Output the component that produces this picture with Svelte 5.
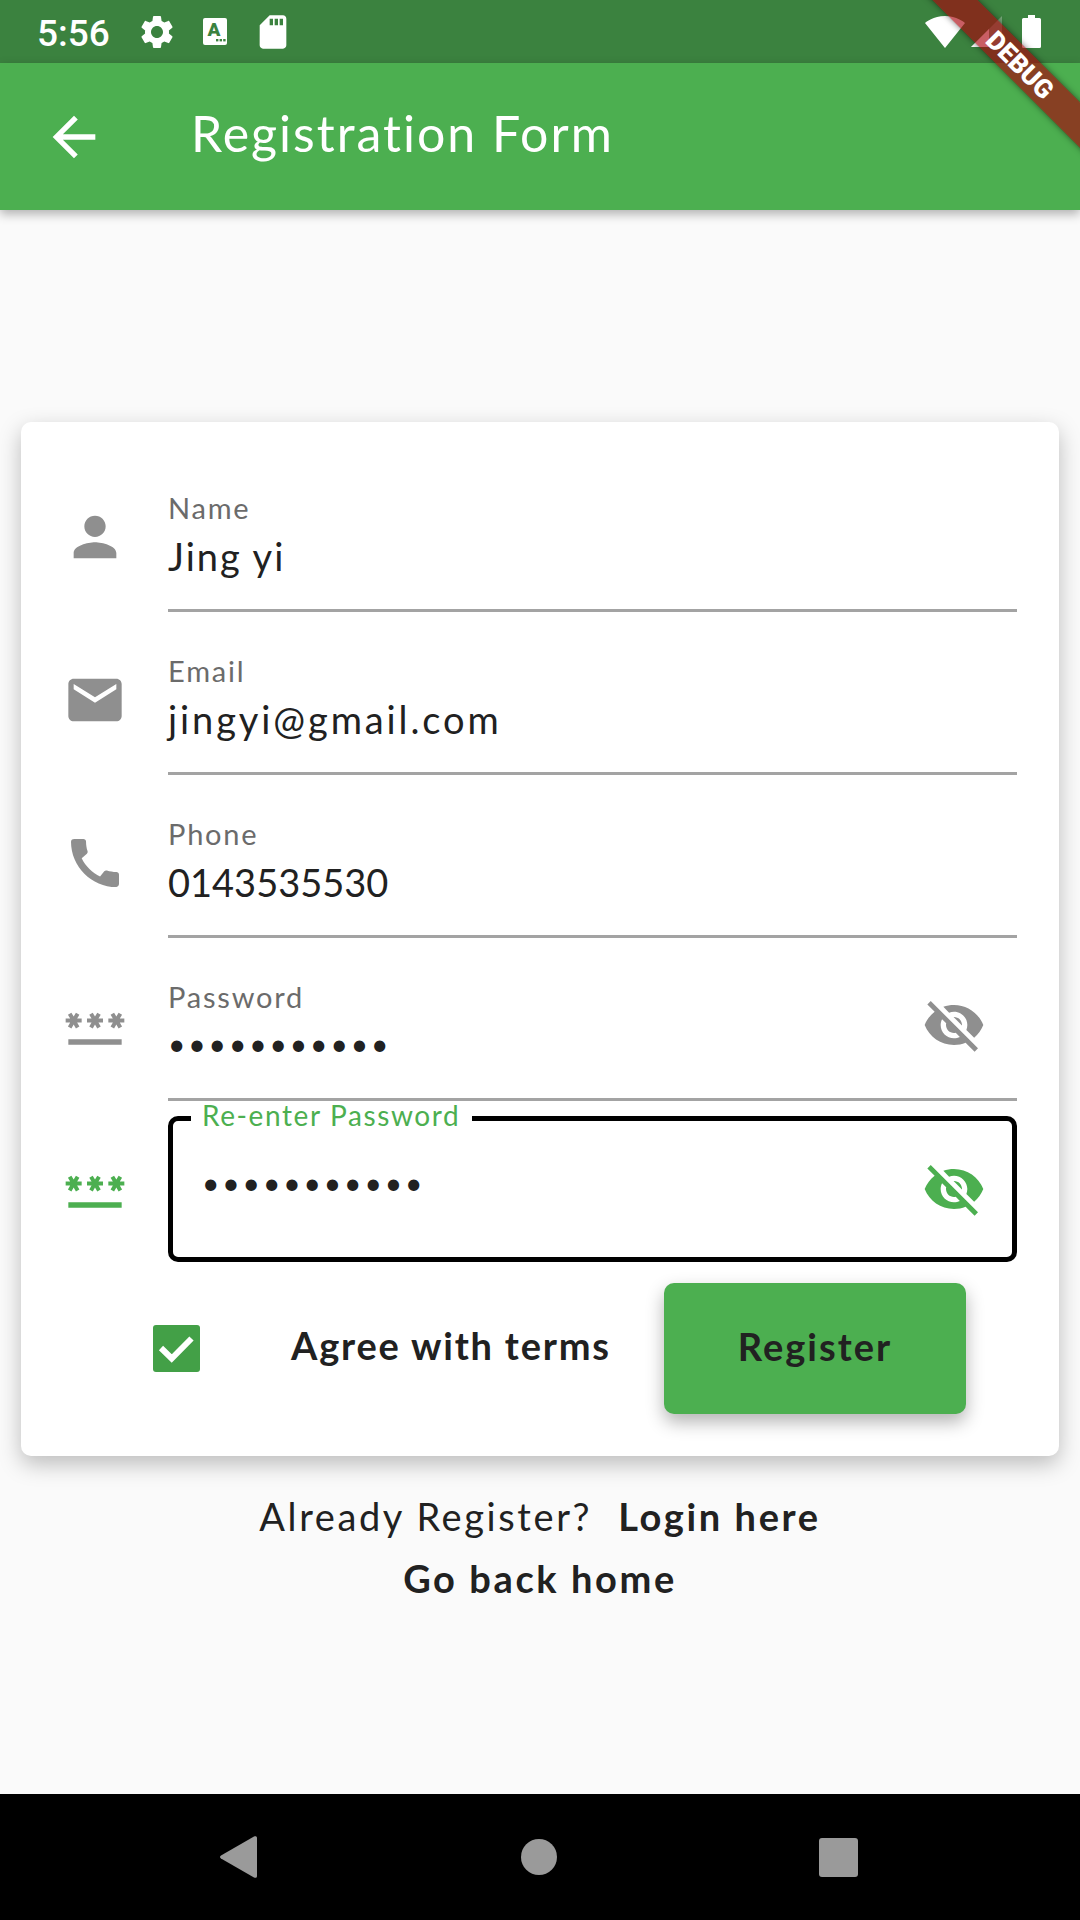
<script>
  const eyeOff = "M12 7c2.76 0 5 2.24 5 5 0 .65-.13 1.26-.36 1.83l2.92 2.92c1.51-1.26 2.7-2.89 3.43-4.75-1.73-4.39-6-7.5-11-7.5-1.4 0-2.74.25-3.98.7l2.16 2.16C10.74 7.13 11.35 7 12 7zM2 4.27l2.28 2.28.46.46C3.08 8.3 1.78 10.02 1 12c1.73 4.39 6 7.5 11 7.5 1.55 0 3.03-.3 4.38-.84l.42.42L19.73 22 21 20.73 3.27 3 2 4.27zM7.53 9.8l1.55 1.55c-.05.21-.08.43-.08.65 0 1.66 1.34 3 3 3 .22 0 .44-.03.65-.08l1.55 1.55c-.67.33-1.41.53-2.2.53-2.76 0-5-2.24-5-5 0-.79.2-1.53.53-2.2zm4.31-.78l3.15 3.15.02-.16c0-1.66-1.34-3-3-3l-.17.01z";
  const passwordIcon = "M2 17h20v2H2v-2zm1.15-4.05L4 11.47l.85 1.48 1.3-.75-.85-1.48H7v-1.5H5.3l.85-1.47L4.85 7 4 8.47 3.15 7l-1.3.75.85 1.47H1v1.5h1.7l-.85 1.48 1.3.75zm6.7-.75 1.3.75.85-1.48.85 1.48 1.3-.75-.85-1.48H15v-1.5h-1.7l.85-1.47-1.3-.75L12 8.47 11.15 7l-1.3.75.85 1.47H9v1.5h1.7l-.85 1.48zM23 9.22h-1.7l.85-1.47-1.3-.75L20 8.47 19.15 7l-1.3.75.85 1.47H17v1.5h1.7l-.85 1.48 1.3.75.85-1.48.85 1.48 1.3-.75-.85-1.48H23v-1.5z";

  // track: letter spacing per value, the digits need none
  const fields = [
    { label: "Name", value: "Jing yi", track: "2px", icon: "M12 12c2.21 0 4-1.79 4-4s-1.79-4-4-4-4 1.79-4 4 1.79 4 4 4zm0 2c-2.67 0-8 1.34-8 4v2h16v-2c0-2.66-5.33-4-8-4z" },
    { label: "Email", value: "jingyi@gmail.com", track: "2.9px", icon: "M20 4H4c-1.1 0-1.99.9-1.99 2L2 18c0 1.1.9 2 2 2h16c1.1 0 2-.9 2-2V6c0-1.1-.9-2-2-2zm0 4l-8 5-8-5V6l8 5 8-5v2z" },
    { label: "Phone", value: "0143535530", track: "0", icon: "M20.01 15.38c-1.23 0-2.42-.2-3.53-.56-.35-.12-.74-.03-1.01.24l-1.57 1.97c-2.83-1.35-5.48-3.9-6.89-6.83l1.95-1.66c.27-.28.35-.67.24-1.02-.37-1.11-.56-2.3-.56-3.53 0-.54-.45-.99-.99-.99H4.19C3.65 3 3 3.24 3 3.99 3 13.28 10.73 21 20.01 21c.71 0 .99-.63.99-1.18v-3.45c0-.54-.45-.99-.99-.99z" },
  ];
</script>

<div class="screen">
  <div class="status">
    <span class="time">5:56</span>
    <svg class="s-gear" width="40" height="40" viewBox="0 0 24 24"><path fill="#fff" d="M19.14 12.94c.04-.3.06-.61.06-.94 0-.32-.02-.64-.07-.94l2.03-1.58c.18-.14.23-.41.12-.61l-1.92-3.32c-.12-.22-.37-.29-.59-.22l-2.39.96c-.5-.38-1.03-.7-1.62-.94l-.36-2.54c-.04-.24-.24-.41-.48-.41h-3.84c-.24 0-.43.17-.47.41l-.36 2.54c-.59.24-1.13.57-1.62.94l-2.39-.96c-.22-.08-.47 0-.59.22L2.74 8.87c-.12.21-.08.47.12.61l2.03 1.58c-.05.3-.09.63-.09.94s.02.64.07.94l-2.03 1.58c-.18.14-.23.41-.12.61l1.92 3.32c.12.22.37.29.59.22l2.39-.96c.5.38 1.03.7 1.62.94l.36 2.54c.05.24.24.41.48.41h3.84c.24 0 .44-.17.47-.41l.36-2.54c.59-.24 1.13-.56 1.62-.94l2.39.96c.22.08.47 0 .59-.22l1.92-3.32c.12-.22.07-.47-.12-.61l-2.01-1.58zM12 15.6c-1.98 0-3.6-1.62-3.6-3.6s1.62-3.6 3.6-3.6 3.6 1.62 3.6 3.6-1.62 3.6-3.6 3.6z"/></svg>
    <svg class="s-icon" width="40" height="40" viewBox="0 0 40 40">
      <rect x="8" y="6" width="24" height="27" rx="2" fill="#fff"/>
      <text x="19" y="24" text-anchor="middle" class="sim-a">A</text>
      <rect x="21" y="27" width="2.4" height="2.4" fill="#3b823f"/>
      <rect x="24.6" y="27" width="2.4" height="2.4" fill="#3b823f"/>
      <rect x="28.2" y="27" width="2.4" height="2.4" fill="#3b823f"/>
    </svg>
    <svg class="s-icon" width="40" height="40" viewBox="0 0 24 24"><path fill="#fff" d="M18 2h-8L4.02 8 4 20c0 1.1.9 2 2 2h12c1.1 0 2-.9 2-2V4c0-1.1-.9-2-2-2zm-6 6h-2V4h2v4zm3 0h-2V4h2v4zm3 0h-2V4h2v4z"/></svg>
    <div class="status-right">
      <svg width="40" height="32" viewBox="0.36 3 23.28 18.5"><path fill="#fff" d="M12.01 21.49L23.64 7c-.45-.34-4.93-4-11.64-4C5.28 3 .81 6.66.36 7l11.63 14.49.01.01.01-.01z"/></svg>
      <svg width="31" height="31" viewBox="2 2 20 20"><path fill="#fff" fill-opacity="0.3" d="M2 22h20V2z"/><path fill="#fff" d="M2 22h11.600V10.400z"/></svg>
      <svg class="battery" width="19" height="33" viewBox="0 0 19 33"><path fill="#fff" d="M6 0h7v3h4.500A1.500 1.500 0 0 1 19 4.500v27a1.500 1.500 0 0 1-1.500 1.500h-16A1.500 1.500 0 0 1 0 31.500v-27A1.500 1.500 0 0 1 1.500 3H6z"/></svg>
    </div>
  </div>

  <header class="appbar">
    <svg class="back" width="64" height="64" viewBox="0 0 24 24"><path fill="#fff" d="M20 11H7.830l5.590-5.590L12 4l-8 8 8 8 1.410-1.410L7.830 13H20v-2z"/></svg>
    <h1>Registration Form</h1>
  </header>

  <main>
    <section class="card">
      {#each fields as f}
        <div class="row">
          <svg class="icon" width="64" height="64" viewBox="0 0 24 24"><path d={f.icon}/></svg>
          <div class="field">
            <span class="label">{f.label}</span>
            <span class="value" style:letter-spacing={f.track}>{f.value}</span>
          </div>
        </div>
      {/each}

      <div class="row">
        <svg class="icon" width="64" height="64" viewBox="0 0 24 24"><path d={passwordIcon}/></svg>
        <div class="field">
          <span class="label">Password</span>
          <span class="value dots">•••••••••••</span>
          <svg class="eye" width="64" height="64" viewBox="0 0 24 24"><path d={eyeOff}/></svg>
        </div>
      </div>

      <div class="row focused">
        <svg class="icon" width="64" height="64" viewBox="0 0 24 24"><path d={passwordIcon}/></svg>
        <div class="box">
          <span class="legend">Re-enter Password</span>
          <span class="value dots">•••••••••••</span>
          <svg class="eye" width="64" height="64" viewBox="0 0 24 24"><path d={eyeOff}/></svg>
        </div>
      </div>

      <div class="actions">
        <span class="checkbox">
          <svg width="47" height="47" viewBox="0 0 47 47"><path d="M8 23l10.700 10.500L38.500 13.500" fill="none" stroke="#fff" stroke-width="6"/></svg>
        </span>
        <span class="agree">Agree with terms</span>
        <button class="register">Register</button>
      </div>
    </section>

    <p class="links"><span class="already">Already Register?</span><b>Login here</b></p>
    <p class="links home"><b>Go back home</b></p>
  </main>

  <nav class="navbar">
    <svg class="nav-back" width="37" height="42" viewBox="0 0 37 42"><path fill="#9a9a9a" d="M1 19.500 34 .6c1.500-.8 3-.2 3 1.500v37.800c0 1.700-1.500 2.300-3 1.500L1 22.500c-1.300-.8-1.300-2.200 0-3z"/></svg>
    <span class="circle"></span>
    <span class="square"></span>
  </nav>

  <div class="ribbon">DEBUG</div>
</div>

<style>
  :global(body) {
    margin: 0;
    background: #fafafa;
  }

  .screen {
    position: relative;
    width: 1080px;
    height: 1920px;
    display: flex;
    flex-direction: column;
    overflow: hidden;
    font-family: Lato, "Liberation Sans", sans-serif;
    color: #212121;
  }

  .status {
    height: 63px;
    background: #3b823f;
    display: flex;
    align-items: center;
    padding: 0 39px 0 37px;
    gap: 18px;
    flex: none;
  }

  .time {
    font-family: Roboto, sans-serif;
    font-size: 37px;
    font-weight: 500;
    color: #fff;
    width: 70px;
    margin-right: 12px;
    padding-top: 3px;
  }

  .status-right {
    margin-left: auto;
    display: flex;
    align-items: center;
    gap: 6px;
  }

  .battery {
    margin-left: 14px;
  }

  .sim-a {
    font-family: Roboto, sans-serif;
    font-weight: 900;
    font-size: 19px;
    fill: #3b823f;
  }

  .appbar {
    height: 147px;
    flex: none;
    background: #4caf50;
    display: flex;
    align-items: center;
    padding-left: 42px;
    box-shadow: 0 4px 10px rgba(0, 0, 0, 0.3);
    position: relative;
  }

  h1 {
    margin: 0 0 8px 85px;
    font-size: 50px;
    font-weight: 400;
    color: #fff;
    letter-spacing: 2px;
  }

  main {
    flex: 1;
    padding: 212px 21px 0;
  }

  .card {
    height: 1034px;
    box-sizing: border-box;
    background: #fff;
    border-radius: 10px;
    box-shadow: 0 8px 22px rgba(0, 0, 0, 0.25);
    padding: 27px 42px 42px 0;
  }

  .row {
    display: flex;
    align-items: center;
    height: 163px;
  }

  .icon {
    width: 64px;
    height: 64px;
    margin: 12px 41px 0 42px;
    fill: #8f8f8f;
    flex: none;
  }

  .focused {
    height: 146px;
    margin-top: 15px;
  }

  .focused .icon {
    margin-top: 0;
  }

  .focused .icon,
  .focused .eye {
    fill: #4caf50;
  }

  .field {
    position: relative;
    flex: 1;
    height: 163px;
    box-sizing: border-box;
    border-bottom: 3px solid #a3a3a3;
    display: flex;
    flex-direction: column;
    justify-content: flex-end;
    padding-bottom: 26px;
  }

  .label {
    font-size: 29px;
    line-height: 42px;
    color: #6b6b6b;
    letter-spacing: 1.8px;
  }

  .value {
    font-size: 38px;
    line-height: 54px;
    color: #212121;
  }

  .dots {
    font-size: 30px;
    letter-spacing: 2.9px;
    margin-top: -2px;
    padding-bottom: 2px;
  }

  .eye {
    position: absolute;
    right: 31px;
    top: 55px;
    fill: #8f8f8f;
  }

  .box {
    position: relative;
    flex: 1;
    height: 146px;
    box-sizing: border-box;
    border: 5px solid #000;
    border-radius: 10px;
    display: flex;
    align-items: center;
    padding-left: 29px;
  }

  .box .dots {
    margin-top: 0;
    padding-bottom: 14px;
  }

  .box .eye {
    top: 36px;
    right: 26px;
  }

  .legend {
    position: absolute;
    left: 18px;
    top: -12px;
    padding: 0 12px 0 11px;
    background: #fff;
    height: 20px;
    line-height: 12px;
    font-size: 28px;
    color: #4caf50;
    white-space: nowrap;
    letter-spacing: 1.6px;
  }

  .actions {
    display: flex;
    align-items: center;
    margin-top: 21px;
    padding-left: 132px;
  }

  .checkbox {
    width: 47px;
    height: 47px;
    border-radius: 3px;
    background: #43a047;
    flex: none;
    display: flex;
  }

  .agree {
    margin-left: 91px;
    width: 373px;
    font-size: 38px;
    font-weight: 700;
    white-space: nowrap;
    letter-spacing: 1.8px;
    padding-bottom: 7px;
  }

  .register {
    width: 302px;
    height: 131px;
    border: none;
    border-radius: 10px;
    background: #4caf50;
    font-family: inherit;
    font-size: 38px;
    font-weight: 700;
    letter-spacing: 2px;
    color: #212121;
    box-shadow: 0 8px 18px rgba(0, 0, 0, 0.3);
    padding: 0 0 6px;
  }

  .links {
    margin: 37px 0 0;
    text-align: center;
    font-size: 38px;
    line-height: 46px;
    letter-spacing: 2.6px;
  }

  .links.home {
    margin-top: 16px;
  }

  .already {
    margin-right: 26px;
  }

  .navbar {
    height: 126px;
    flex: none;
    background: #000;
    display: flex;
    align-items: center;
    justify-content: center;
    gap: 262px;
    padding-right: 3px;
  }

  .nav-back {
    margin-right: 2px;
  }

  .circle {
    width: 36px;
    height: 36px;
    border-radius: 50%;
    background: #9a9a9a;
  }

  .square {
    width: 39px;
    height: 39px;
    border-radius: 3px;
    background: #9a9a9a;
  }

  .ribbon {
    position: absolute;
    left: 820px;
    top: 49px;
    width: 400px;
    height: 32px;
    line-height: 32px;
    text-align: center;
    transform: rotate(45deg);
    background: rgba(170, 0, 10, 0.63);
    box-shadow: 0 0 6px rgba(0, 0, 0, 0.5);
    color: #fff;
    font-family: Roboto, sans-serif;
    font-weight: 900;
    font-size: 26px;
  }
</style>
